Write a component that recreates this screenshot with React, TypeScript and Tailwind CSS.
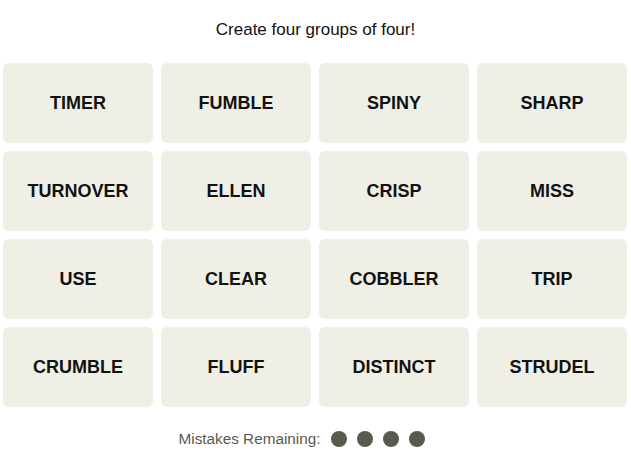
import React from 'react';

const words = [
  'TIMER', 'FUMBLE', 'SPINY', 'SHARP',
  'TURNOVER', 'ELLEN', 'CRISP', 'MISS',
  'USE', 'CLEAR', 'COBBLER', 'TRIP',
  'CRUMBLE', 'FLUFF', 'DISTINCT', 'STRUDEL',
];

export default function App() {
  return (
    <div className="w-[631px] h-[451px] bg-white font-['Liberation_Sans',Arial,sans-serif] text-[#121212]">
      <p className="pt-[19px] h-[63px] text-center text-[17px] leading-[22px]">Create four groups of four!</p>

      {/* Board */}
      <div className="grid grid-cols-[repeat(4,150px)] auto-rows-[80px] gap-2 pl-[3px]">
        {words.map(w => (
          <button
            key={w}
            className="bg-[#efefe6] rounded-md flex items-center justify-center text-[18px] font-bold"
          >
            {w}
          </button>
        ))}
      </div>

      <div className="flex items-center justify-center gap-[11px] mt-[21px] pr-[27px]">
        <span className="text-[15.3px] text-[#5a594e]">Mistakes Remaining:</span>
        <div className="flex gap-[10px]">
          {[0, 1, 2, 3].map(i => (
            <span key={i} className="w-4 h-4 rounded-full bg-[#5a594e]" />
          ))}
        </div>
      </div>
    </div>
  );
}
